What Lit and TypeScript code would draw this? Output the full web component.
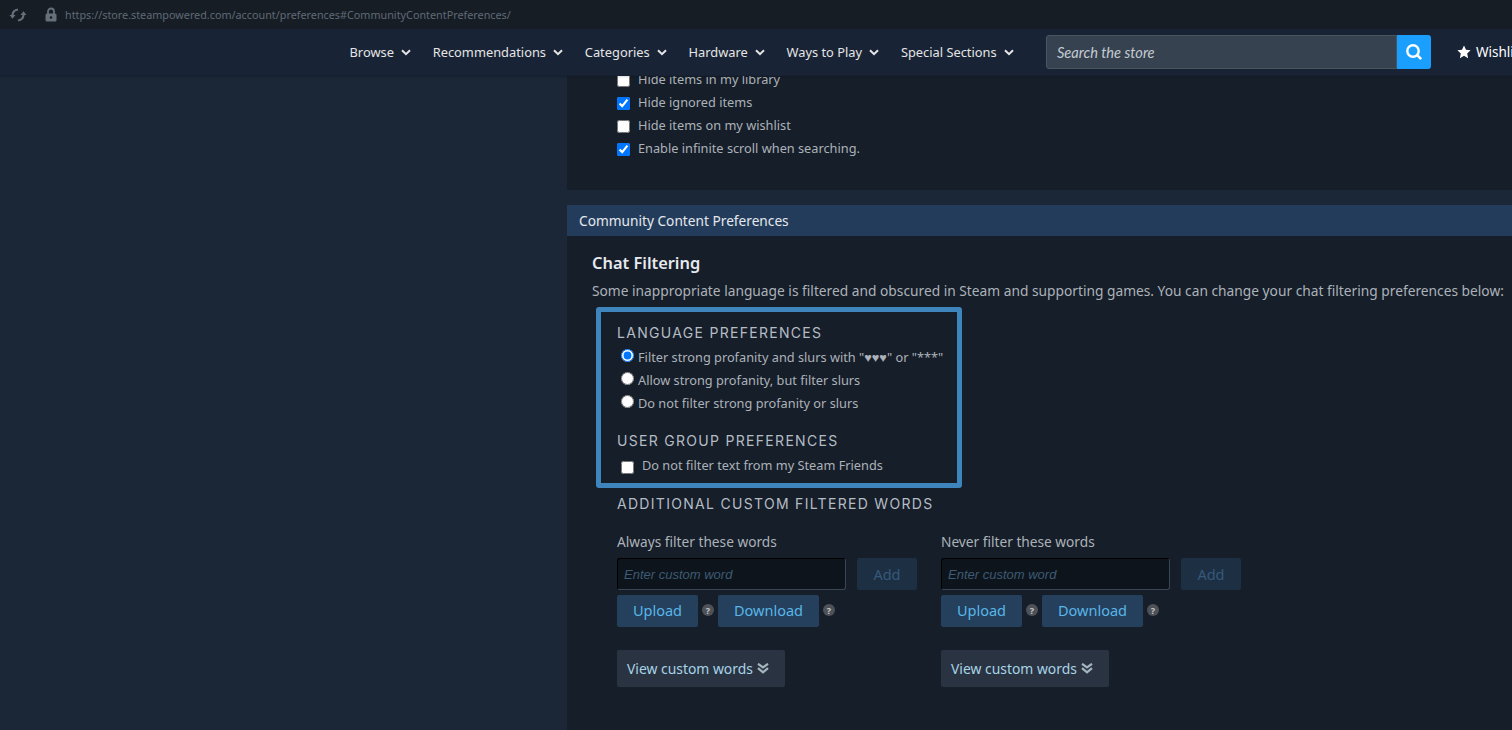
import { LitElement, html, css, svg } from "lit";
import { customElement } from "lit/decorators.js";

const chevron = svg`<svg class="chev" viewBox="0 0 10 7" width="10" height="7"><path d="M1 1.2 L5 5.2 L9 1.2" fill="none" stroke="currentColor" stroke-width="2"/></svg>`;

@customElement("app-root")
export class AppRoot extends LitElement {
  static styles = css`
    :host { display: flex; flex-direction: column; width: 1512px; height: 730px; overflow: hidden; background: #1b2636; font-family: "Noto Sans", sans-serif; color: #acb2b8; font-size: 12.75px; }
    * { box-sizing: border-box; }
    .urlbar { height: 29px; flex: none; background: #171d25; display: flex; align-items: center; padding-left: 9px; color: #5f6a75; font-size: 10.8px; }
    .sync { width: 18px; height: 14px; }
    .lock { width: 12px; height: 15px; margin-left: 18px; }
    .url { margin-left: 8px; }
    .nav { height: 47px; flex: none; background: #182335; border-bottom: 1px solid #162030; box-shadow: 0 1px 2px rgba(0,0,0,.15); display: flex; align-items: center; padding-left: 349.5px; color: #e5e5e5; font-size: 12.85px; white-space: nowrap; position: relative; z-index: 1; overflow: hidden; }
    .item { flex: none; display: flex; align-items: center; gap: 7px; margin-right: 21.8px; }
    .chev { margin-top: 1px; }
    .search { flex: none; width: 351px; height: 34px; margin-left: 10.5px; background: #364250; border: 1px solid #4a5562; border-radius: 3px 0 0 3px; font-family: Lato, sans-serif; font-style: italic; font-size: 14.6px; color: #c5cbd2; display: flex; align-items: center; padding-left: 10px; }
    .sbtn { flex: none; width: 34px; height: 34px; background: #1a9fff; border-radius: 0 3px 3px 0; display: flex; align-items: center; justify-content: center; }
    .wish { flex: none; display: flex; align-items: center; gap: 5px; margin-left: 26px; color: #fff; font-size: 13.5px; }
    .body { flex: 1; display: flex; min-height: 0; }
    .side { width: 567px; flex: none; }
    .main { flex: 1; min-width: 0; display: flex; flex-direction: column; white-space: nowrap; }
    .top { height: 123px; flex: none; background: #161e2a; padding-left: 50px; display: flex; flex-direction: column; margin-top: -9px; }
    .row { height: 23px; display: flex; align-items: center; gap: 8px; }
    input { margin: 0; width: 13px; height: 13px; flex: none; }
    .row input { margin-top: 4px; }
    .bar { margin-top: 15px; height: 31px; flex: none; background: #233c5b; color: #e4e8ec; font-size: 13.7px; display: flex; align-items: center; padding-left: 12px; }
    .content { flex: 1; background: #161e2a; padding: 16px 0 0 25px; }
    h2 { margin: 0; font-size: 16.4px; font-weight: 600; color: #e6eaee; line-height: 22px; }
    .intro { margin-top: 7px; font-size: 13.76px; line-height: 20px; }
    .hl { margin: 6px 0 0 4px; width: 366px; height: 181px; border: 5px solid #3f85bd; border-radius: 3px; padding: 11px 0 0 16px; }
    .hd { font-family: Inter, sans-serif; font-size: 14px; letter-spacing: 1.3px; color: #b4bcc4; line-height: 20px; }
    .hd1 { margin-bottom: 2px; }
    .radio { height: 23px; display: flex; align-items: center; padding-left: 4px; gap: 4px; }
    .radio input { margin-top: -2px; }
    .hd2 { margin-top: 17px; }
    .friends { height: 23px; display: flex; align-items: center; padding-left: 4px; gap: 8px; margin-top: 2px; }
    .friends input { margin-top: 6px; }
    .hd3 { margin: 6px 0 0 25px; }
    .cols { display: flex; margin: 19px 0 0 25px; gap: 24px; }
    .col { width: 300px; }
    .lbl { font-size: 13.7px; line-height: 20px; margin-top: -1px; }
    .inrow { display: flex; margin-top: 6px; gap: 11px; }
    .inp { width: 229px; height: 32px; background: #0e141b; border: 1px solid #000; border-bottom-color: #3b4654; border-right-color: #3b4654; border-radius: 3px; font: italic 13px "Liberation Sans", sans-serif; color: #3d5b74; display: flex; align-items: center; padding-left: 6px; }
    .add { width: 60px; height: 32px; background: #1d2f43; color: #36597a; border-radius: 2px; font-size: 14.5px; display: flex; align-items: center; justify-content: center; }
    .btns { display: flex; align-items: center; margin-top: 5px; }
    .btn { height: 32px; padding-bottom: 2px; background: #25405c; color: #59b6e8; font-size: 14.5px; border-radius: 2px; display: flex; align-items: center; justify-content: center; }
    .up { width: 81px; }
    .down { width: 101px; }
    .q { width: 12px; height: 12px; border-radius: 50%; background: #4e5258; color: #c4c6c9; font-size: 9px; font-weight: 700; display: flex; align-items: center; justify-content: center; margin: -2px 0 0 4px; }
    .q1 { margin-right: 4px; }
    .view { margin-top: 23px; width: 168px; height: 37px; background: #2a3341; color: #a8d4e8; font-size: 13.9px; border-radius: 2px; display: flex; align-items: center; padding-left: 10px; gap: 4px; }
    .dbl { color: #a5b5c0; }
  `;

  private radio(label: string, checked = false) {
    return html`<div class="radio"><input type="radio" name="lang" ?checked=${checked} /><span>${label}</span></div>`;
  }
  private check(label: string, checked = false) {
    return html`<div class="row"><input type="checkbox" ?checked=${checked} /><span>${label}</span></div>`;
  }
  private column(label: string) {
    return html`<div class="col">
      <div class="lbl">${label}</div>
      <div class="inrow"><div class="inp">Enter custom word</div><div class="add">Add</div></div>
      <div class="btns">
        <div class="btn up">Upload</div><div class="q q1">?</div>
        <div class="btn down">Download</div><div class="q">?</div>
      </div>
      <div class="view">View custom words
        <svg class="dbl" width="12" height="11" viewBox="0 0 12 11"><path d="M1 .8 L6 4.4 L11 .8 M1 5.2 L6 9.4 L11 5.2" fill="none" stroke="currentColor" stroke-width="2.2"/></svg>
      </div>
    </div>`;
  }

  render() {
    const nav = ["Browse", "Recommendations", "Categories", "Hardware", "Ways to Play", "Special Sections"];
    return html`
      <div class="urlbar">
        <svg class="sync" viewBox="0 0 18 14"><path d="M9 1.5 Q4 2 3.5 7 M9 12.5 Q14 12 14.5 7" fill="none" stroke="#67707a" stroke-width="2.2"/><path d="M.5 7 H6.5 L3.5 10.8Z M11.5 7 H17.5 L14.5 3.2Z" fill="#67707a"/></svg>
        <svg class="lock" viewBox="0 0 12 15"><path d="M3 7 V4.5 a3 3 0 0 1 6 0 V7" fill="none" stroke="#67707a" stroke-width="1.8"/><rect x="0.5" y="6.5" width="11" height="8" rx="1.5" fill="#67707a"/><circle cx="6" cy="10.5" r="1.3" fill="#171d25"/></svg>
        <span class="url">https://store.steampowered.com/account/preferences#CommunityContentPreferences/</span>
      </div>
      <div class="nav">
        ${nav.map((n) => html`<div class="item">${n}${chevron}</div>`)}
        <div class="search">Search the store</div>
        <div class="sbtn"><svg width="18" height="18" viewBox="0 0 18 18"><circle cx="8" cy="8" r="5.7" fill="none" stroke="#fff" stroke-width="2.4"/><path d="M12.2 12.2 L16.2 16.2" stroke="#fff" stroke-width="2.6"/></svg></div>
        <div class="wish"><svg width="14" height="14" viewBox="0 0 24 24"><path d="M12 1 L15.4 8.2 L23.3 9.2 L17.5 14.6 L19 22.5 L12 18.6 L5 22.5 L6.5 14.6 L.7 9.2 L8.6 8.2Z" fill="#fff"/></svg>Wishlist</div>
      </div>
      <div class="body">
        <div class="side"></div>
        <div class="main">
          <div class="top">
            ${this.check("Hide items in my library")}
            ${this.check("Hide ignored items", true)}
            ${this.check("Hide items on my wishlist")}
            ${this.check("Enable infinite scroll when searching.", true)}
          </div>
          <div class="bar">Community Content Preferences</div>
          <div class="content">
            <h2>Chat Filtering</h2>
            <div class="intro">Some inappropriate language is filtered and obscured in Steam and supporting games. You can change your chat filtering preferences below:</div>
            <div class="hl">
              <div class="hd hd1">LANGUAGE PREFERENCES</div>
              ${this.radio('Filter strong profanity and slurs with "♥♥♥" or "***"', true)}
              ${this.radio("Allow strong profanity, but filter slurs")}
              ${this.radio("Do not filter strong profanity or slurs")}
              <div class="hd hd2">USER GROUP PREFERENCES</div>
              <div class="friends"><input type="checkbox" /><span>Do not filter text from my Steam Friends</span></div>
            </div>
            <div class="hd hd3">ADDITIONAL CUSTOM FILTERED WORDS</div>
            <div class="cols">
              ${this.column("Always filter these words")}
              ${this.column("Never filter these words")}
            </div>
          </div>
        </div>
      </div>
    `;
  }
}
